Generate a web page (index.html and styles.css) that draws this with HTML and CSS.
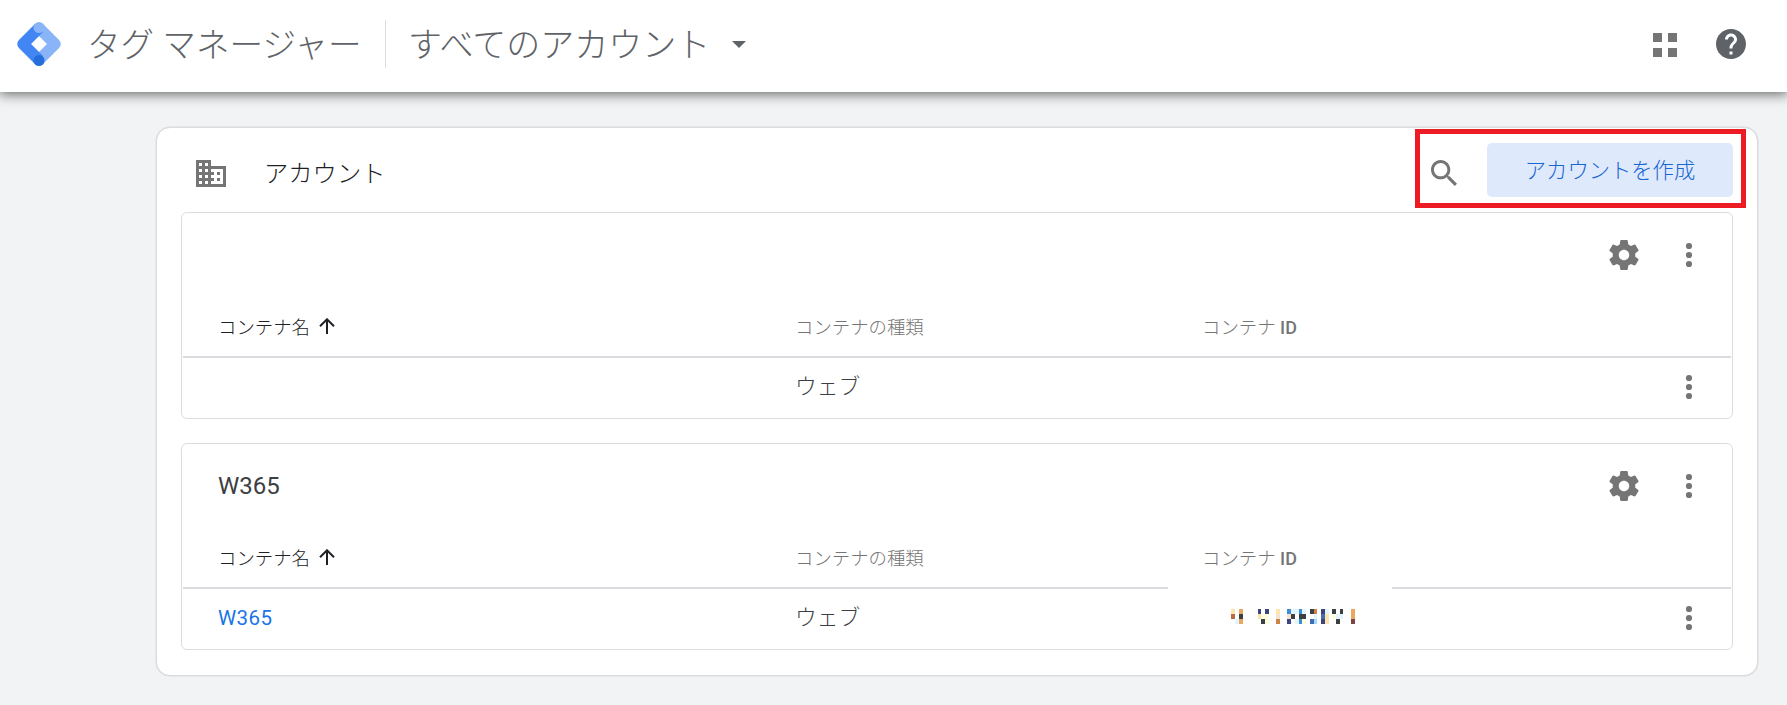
FILE: index.html
```html
<!DOCTYPE html>
<html lang="ja">
<head>
<meta charset="utf-8">
<title>タグ マネージャー</title>
<link rel="stylesheet" href="styles.css">
</head>
<body>
<svg width="0" height="0" class="defs">
  <symbol id="gear" viewBox="0 0 24 24"><path d="M19.43 12.98c.04-.32.07-.64.07-.98s-.03-.66-.07-.98l2.11-1.65c.19-.15.24-.42.12-.64l-2-3.46c-.12-.22-.39-.3-.61-.22l-2.49 1c-.52-.4-1.08-.73-1.69-.98l-.38-2.65C14.46 2.18 14.25 2 14 2h-4c-.25 0-.46.18-.49.42l-.38 2.65c-.61.25-1.17.59-1.69.98l-2.49-1c-.23-.09-.49 0-.61.22l-2 3.46c-.13.22-.07.49.12.64l2.11 1.65c-.04.32-.07.65-.07.98s.03.66.07.98l-2.11 1.65c-.19.15-.24.42-.12.64l2 3.46c.12.22.39.3.61.22l2.49-1c.52.4 1.08.73 1.69.98l.38 2.65c.03.24.24.42.49.42h4c.25 0 .46-.18.49-.42l.38-2.65c.61-.25 1.17-.59 1.69-.98l2.49 1c.23.09.49 0 .61-.22l2-3.46c.12-.22.07-.49-.12-.64l-2.11-1.65zM12 15.5c-1.93 0-3.5-1.57-3.5-3.5s1.57-3.5 3.5-3.5 3.5 1.57 3.5 3.5-1.57 3.5-3.5 3.5z"/></symbol>
  <symbol id="more" viewBox="0 0 36 36"><circle cx="18" cy="9" r="3.1"/><circle cx="18" cy="18" r="3.1"/><circle cx="18" cy="27" r="3.1"/></symbol>
  <symbol id="up" viewBox="0 0 16 16"><path d="M8 16V1.5M1 8.3l7-7 7 7" fill="none" stroke="#202124" stroke-width="2"/></symbol>
</svg>
<header class="topbar">
  <svg class="logo" viewBox="0 0 44 44">
    <path d="M22 6 L38 22 L22 38" fill="none" stroke="#8ab4f8" stroke-width="11.5" stroke-linejoin="round"/>
    <path d="M22 6 L6 22 L22 38" fill="none" stroke="#4285f4" stroke-width="11.5" stroke-linejoin="round"/>
    <circle cx="22" cy="5.5" r="5.5" fill="#8ab4f8"/>
    <circle cx="22" cy="38.5" r="5.5" fill="#246fdb"/>
  </svg>
  <h1 class="product">タグ マネージャー</h1>
  <div class="picker"><span>すべてのアカウント</span><svg class="caret" viewBox="0 0 14 7"><path d="M0 0h14L7 7z"/></svg></div>
  <svg class="apps" viewBox="0 0 24 24"><path d="M0 0h9v9H0zM15 0h9v9h-9zM0 15h9v9H0zM15 15h9v9h-9z"/></svg>
  <svg class="help" viewBox="2 2 20 20"><path d="M12 2C6.48 2 2 6.48 2 12s4.480 10 10 10 10-4.480 10-10S17.520 2 12 2zm1 17h-2v-2h2v2zm2.070-7.750l-.9.920C13.450 12.900 13 13.500 13 15h-2v-.5c0-1.100.450-2.100 1.170-2.830l1.240-1.260c.370-.360.590-.860.590-1.410 0-1.100-.9-2-2-2s-2 .9-2 2H8c0-2.210 1.790-4 4-4s4 1.790 4 4c0 .880-.360 1.680-.930 2.250z"/></svg>
</header>
<main class="panel">
  <div class="panel-head">
    <svg class="building" viewBox="2 3 20 18" preserveAspectRatio="none"><path d="M12 7V3H2v18h20V7H12zM6 19H4v-2h2v2zm0-4H4v-2h2v2zm0-4H4V9h2v2zm0-4H4V5h2v2zm4 12H8v-2h2v2zm0-4H8v-2h2v2zm0-4H8V9h2v2zm0-4H8V5h2v2zm10 12h-8v-2h2v-2h-2v-2h2v-2h-2V9h8v10zm-2-8h-2v2h2v-2zm0 4h-2v2h2v-2z"/></svg>
    <h2 class="panel-title">アカウント</h2>
    <svg class="search" viewBox="3 3 17.500 17.500"><path d="M15.500 14h-.79l-.28-.27C15.410 12.590 16 11.110 16 9.500 16 5.910 13.090 3 9.500 3S3 5.910 3 9.500 5.910 16 9.500 16c1.610 0 3.090-.59 4.230-1.570l.27.28v.79l5 4.990L20.490 19l-4.990-5zm-6 0C7.010 14 5 11.990 5 9.500S7.010 5 9.500 5 14 7.010 14 9.500 11.990 14 9.500 14z"/></svg>
    <button class="create">アカウントを作成</button>
    <div class="highlight"></div>
  </div>
  <section class="account">
    <div class="account-head">
      <h3 class="account-name"></h3>
      <svg class="gear"><use href="#gear"/></svg><svg class="more"><use href="#more"/></svg>
    </div>
    <div class="row labels"><span class="sorted">コンテナ名<svg class="up"><use href="#up"/></svg></span><span>コンテナの種類</span><span>コンテナ <b>ID</b></span></div>
    <div class="row item"><a class="link"></a><span class="type">ウェブ</span><span></span><svg class="more"><use href="#more"/></svg></div>
  </section>
  <section class="account">
    <div class="account-head">
      <h3 class="account-name">W365</h3>
      <svg class="gear"><use href="#gear"/></svg><svg class="more"><use href="#more"/></svg>
    </div>
    <div class="row labels"><span class="sorted">コンテナ名<svg class="up"><use href="#up"/></svg></span><span>コンテナの種類</span><span>コンテナ <b>ID</b></span></div>
    <div class="row item"><a class="link">W365</a><span class="type">ウェブ</span><span class="masked">
      <svg class="mosaic" viewBox="0 0 124 15" shape-rendering="crispEdges">
        <path fill="#e2f4ff" d="M4 10h4v5h-4zM60 0h8v5h-8zM71 0h4v5h-4zM64 10h4v5h-4zM83 5h3v5h-3zM94 0h4v5h-4zM105 5h7v5h-7z"/>
        <path fill="#fffde0" d="M30 5h8v5h-8zM34 10h4v5h-4zM71 10h4v5h-4zM101 5h4v5h-4z"/>
        <path fill="#ffe4ae" d="M0 0h4v5h-4zM45 0h4v5h-4zM27 5h3v5h-3zM94 5h4v10h-4z"/>
        <path fill="#f5e3d0" d="M45 5h4v5h-4zM56 5h4v5h-4z"/>
        <path fill="#e8a860" d="M8 0h4v5h-4zM8 10h4v5h-4zM120 0h4v10h-4z"/>
        <path fill="#cc8548" d="M45 10h4v5h-4zM83 0h3v5h-3z"/>
        <path fill="#b86b40" d="M0 5h4v5h-4z"/>
        <path fill="#784646" d="M120 10h4v5h-4z"/>
        <path fill="#3c4043" d="M8 5h4v5h-4zM30 10h4v5h-4zM60 5h4v5h-4zM68 5h7v5h-7zM79 0h4v5h-4zM101 0h4v5h-4zM109 0h3v5h-3zM105 10h4v5h-4z"/>
        <path fill="#3c4580" d="M27 0h3v5h-3zM34 0h4v5h-4zM56 10h4v5h-4zM90 0h4v5h-4zM90 10h4v5h-4z"/>
        <path fill="#3c8fd0" d="M56 0h4v5h-4zM68 0h3v5h-3zM68 10h3v5h-3z"/>
        <path fill="#406cb0" d="M79 10h4v5h-4zM90 5h4v5h-4z"/>
        <path fill="#a5d8ff" d="M83 10h3v5h-3z"/>
      </svg></span><svg class="more"><use href="#more"/></svg></div>
  </section>
</main>
</body>
</html>
```
FILE: styles.css
```css
* { box-sizing: border-box; }
body {
  margin: 0;
  height: 705px;
  overflow: hidden;
  background: #f1f3f4;
  color: #3c4043;
  font-family: Roboto, "Noto Sans CJK JP", sans-serif;
  font-weight: 300;
}
h1, h2, h3 { margin: 0; font-weight: 300; }
svg { display: block; flex: none; fill: #757575; }
.defs { position: absolute; }

.topbar {
  display: flex;
  align-items: center;
  height: 92px;
  padding: 0 41px 4px 17px;
  background: #fff;
  box-shadow: 0 1px 12px 1px rgba(0, 0, 0, .6);
  color: #5f6368;
  white-space: nowrap;
}
.logo { width: 44px; height: 44px; }
.product { width: 298px; margin: -3px 0 0 26px; font-size: 33.600px; }
.picker {
  display: flex;
  align-items: center;
  height: 48px;
  padding-left: 22px;
  border-left: 1px solid #dadce0;
  font-size: 34px;
}
.picker span { margin-top: -3px; }
.caret { width: 14px; height: 7px; margin-left: 22px; fill: #5f6368; }
.apps { width: 24px; height: 24px; margin: 2px 39px 0 auto; }
.help { width: 30px; height: 30px; fill: #5f6368; }

.panel {
  width: 1602px;
  height: 549px;
  margin: 35px 0 0 156px;
  padding: 0 24px;
  background: #fff;
  border: 1px solid #dadce0;
  border-radius: 14px;
  box-shadow: 0 0 0 .5px #dadce0;
}
.panel-head {
  position: relative;
  display: flex;
  align-items: center;
  height: 84px;
  padding-left: 15px;
}
.building { width: 30px; height: 27px; margin-top: 6px; }
.panel-title { margin: 3px auto 0 38px; color: #202124; font-size: 24.300px; }
.search { width: 26px; height: 26px; margin: 5px 30px 0 0; }
.create {
  width: 246px;
  height: 54px;
  padding-bottom: 4px;
  border: 0;
  border-radius: 5px;
  background: #dfe9fc;
  color: #1967d2;
  font: inherit;
  font-size: 21.300px;
}
.highlight {
  position: absolute;
  top: 1px;
  right: -13px;
  width: 331px;
  height: 79px;
  border: 5px solid #ed1c24;
}

.account {
  height: 207px;
  margin-bottom: 24px;
  border: 1px solid #dadce0;
  border-radius: 6px;
}
.account-head {
  display: flex;
  align-items: center;
  height: 84px;
  padding: 0 25px 0 36px;
}
.account-name { flex: 1; margin-top: -1px; font-size: 24px; font-weight: 400; }
.gear { width: 36px; height: 36px; margin-right: 29px; }
.more { width: 36px; height: 36px; }
.row {
  display: grid;
  grid-template-columns: 577px 407px 1fr auto;
  align-items: center;
  margin: 0 1px;
  padding: 0 24px 0 35px;
}
.labels {
  height: 61px;
  padding-bottom: 2px;
  border-bottom: 2px solid #dadce0;
  color: #757575;
  font-size: 18.400px;
}
.labels b { font-size: 18px; font-weight: 500; }
.sorted { display: flex; align-items: center; color: #202124; }
.up { width: 16px; height: 16px; margin-left: 9px; }
.item { height: 57px; font-size: 21.700px; }
.type { margin-top: -4px; }
.link { color: #1a73e8; font-size: 20.500px; font-weight: 400; letter-spacing: .4px; }
.masked { position: relative; }
.masked::before {
  content: "";
  position: absolute;
  top: -28px;
  left: -34px;
  width: 224px;
  height: 20px;
  background: #fff;
}
.mosaic { width: 124px; height: 15px; margin: -3px 0 0 29px; }
```
